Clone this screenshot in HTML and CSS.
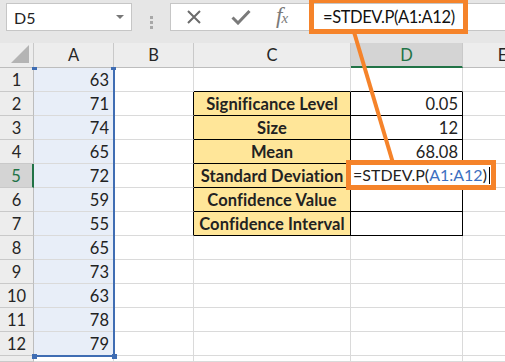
FILE: index.html
```html
<!doctype html>
<html lang="en">
    <head>
        <meta charset="UTF-8" />
        <title>STDEV.P - Excel</title>
        <link rel="stylesheet" href="styles.css">
    </head>
    <body>
        <div class="app">
            <div class="toolbar">
                <div class="name-box">
                    <span>D5</span>
                    <span class="caret"></span>
                </div>
                <div class="grip"><i></i><i></i><i></i></div>
                <div class="formula-bar">
                    <div class="fb-buttons">
                        <svg class="fb-icon" width="16" height="16" viewBox="0 0 16 16">
                            <path d="M2 2 L14 14 M14 2 L2 14" stroke="#6b6b6b" stroke-width="2" fill="none" />
                        </svg>
                        <svg class="fb-icon" width="20" height="16" viewBox="0 0 20 16">
                            <path d="M1.5 8.5 L7 14 L18.5 2" stroke="#7a7a7a" stroke-width="3" fill="none" />
                        </svg>
                        <span class="fx">f<sub>x</sub></span>
                    </div>
                    <div class="fb-input">=STDEV.P(A1:A12)</div>
                </div>
            </div>

            <div class="sheet">
                <div class="hd corner"><span class="tri"></span></div>
                <div class="hd">A</div>
                <div class="hd">B</div>
                <div class="hd">C</div>
                <div class="hd active-col">D</div>
                <div class="hd">E</div>

                <div class="rh">1</div>
                <div class="c sel num">63</div><div class="c"></div><div class="c tb-top"></div><div class="c tb-top"></div><div class="c"></div>

                <div class="rh">2</div>
                <div class="c sel num">71</div><div class="c tb-left"></div><div class="c tb label">Significance Level</div><div class="c tb num">0.05</div><div class="c"></div>

                <div class="rh">3</div>
                <div class="c sel num">74</div><div class="c tb-left"></div><div class="c tb label">Size</div><div class="c tb num">12</div><div class="c"></div>

                <div class="rh">4</div>
                <div class="c sel num">65</div><div class="c tb-left"></div><div class="c tb label">Mean</div><div class="c tb num">68.08</div><div class="c"></div>

                <div class="rh active-row">5</div>
                <div class="c sel num">72</div><div class="c tb-left"></div><div class="c tb label">Standard Deviation</div><div class="c tb"></div><div class="c"></div>

                <div class="rh">6</div>
                <div class="c sel num">59</div><div class="c tb-left"></div><div class="c tb label">Confidence Value</div><div class="c tb"></div><div class="c"></div>

                <div class="rh">7</div>
                <div class="c sel num">55</div><div class="c tb-left"></div><div class="c tb label">Confidence Interval</div><div class="c tb"></div><div class="c"></div>

                <div class="rh">8</div>
                <div class="c sel num">65</div><div class="c"></div><div class="c"></div><div class="c"></div><div class="c"></div>

                <div class="rh">9</div>
                <div class="c sel num">73</div><div class="c"></div><div class="c"></div><div class="c"></div><div class="c"></div>

                <div class="rh">10</div>
                <div class="c sel num">63</div><div class="c"></div><div class="c"></div><div class="c"></div><div class="c"></div>

                <div class="rh">11</div>
                <div class="c sel num">78</div><div class="c"></div><div class="c"></div><div class="c"></div><div class="c"></div>

                <div class="rh">12</div>
                <div class="c sel num">79</div><div class="c"></div><div class="c"></div><div class="c"></div><div class="c"></div>

                <div class="rh"></div>
                <div class="c"></div><div class="c"></div><div class="c"></div><div class="c"></div><div class="c"></div>
            </div>

            <!-- range highlight A1:A12 -->
            <div class="range">
                <span class="handle h-tl"></span>
                <span class="handle h-tr"></span>
                <span class="handle h-bl"></span>
                <span class="handle h-br"></span>
            </div>

            <!-- callout -->
            <svg class="connector" width="505" height="362">
                <line x1="354" y1="32" x2="393" y2="163" stroke="#f5832a" stroke-width="4" />
            </svg>
            <div class="callout callout-bar"></div>
            <div class="callout callout-cell">
                =STDEV.P(<span class="ref">A1:A12</span>)<span class="cursor"></span>
            </div>
        </div>
    </body>
</html>
```

FILE: styles.css
```css
* {
    margin: 0;
    padding: 0;
    box-sizing: border-box;
}

body {
    font-family: Lato, "Open Sans", sans-serif;
    color: #222;
    background: #fff;
    width: 505px;
    height: 362px;
    overflow: hidden;
}

.app {
    position: relative;
    width: 505px;
    height: 362px;
    overflow: hidden;
}

/* top bar */

.toolbar {
    height: 43px;
    background: #e6e6e6;
    display: flex;
    padding: 3px 0 0 6px;
}

.name-box {
    width: 126px;
    height: 28px;
    background: #fff;
    border: 1px solid #c6c6c6;
    display: flex;
    align-items: center;
    justify-content: space-between;
    padding: 0 7px 0 7px;
    font-size: 16px;
}

.caret {
    width: 0;
    height: 0;
    border-left: 4px solid transparent;
    border-right: 4px solid transparent;
    border-top: 4px solid #777;
}

.grip {
    width: 38px;
    display: flex;
    flex-direction: column;
    align-items: center;
    justify-content: center;
    gap: 2px;
    padding-bottom: 2px;
}

.grip i {
    width: 3px;
    height: 3px;
    background: #a8a8a8;
}

.formula-bar {
    flex: 1;
    height: 28px;
    background: #fff;
    border: 1px solid #c6c6c6;
    border-right: none;
    display: flex;
    align-items: center;
}

.fb-buttons {
    display: flex;
    align-items: center;
    gap: 29px;
    padding-left: 15px;
    width: 139px;
}

.fx {
    font-family: "Liberation Serif", serif;
    font-style: italic;
    font-size: 23px;
    color: #7a7a7a;
    letter-spacing: -1px;
    margin-left: -4px;
    margin-top: -2px;
}

.fx sub {
    font-size: 15px;
    vertical-align: baseline;
}

.fb-input {
    padding-left: 13px;
    font-size: 16.5px;
    letter-spacing: -0.4px;
    color: #111;
}

/* sheet grid */

.sheet {
    display: grid;
    grid-template-columns: 34px 80px 80px 157px 112px 80px;
    grid-template-rows: 25px repeat(12, 24px) 1fr;
    height: 319px;
}

.hd {
    background: #ededed;
    border-right: 1px solid #c9c9c9;
    border-bottom: 1px solid #bdbdbd;
    display: flex;
    align-items: center;
    justify-content: center;
    font-size: 16.5px;
    color: #262626;
}

.corner {
    position: relative;
}

.tri {
    position: absolute;
    right: 4px;
    bottom: 4px;
    width: 0;
    height: 0;
    border-left: 18px solid transparent;
    border-bottom: 18px solid #b4b4b4;
}

.active-col {
    background: #d4d4d4;
    color: #217346;
    border-bottom: 2px solid #217346;
}

.rh {
    background: #ededed;
    border-right: 1px solid #bdbdbd;
    border-bottom: 1px solid #c9c9c9;
    display: flex;
    align-items: center;
    justify-content: center;
    font-size: 16.5px;
    color: #262626;
}

.active-row {
    background: #d4d4d4;
    color: #217346;
    border-right: 2px solid #217346;
}

.c {
    border-right: 1px solid #dadada;
    border-bottom: 1px solid #dadada;
    display: flex;
    align-items: center;
    font-size: 16.5px;
    padding: 0 4px;
    white-space: nowrap;
}

.sel {
    background: #e8eef8;
}

.num {
    justify-content: flex-end;
}

.label {
    justify-content: center;
    font-weight: 700;
    background: #ffe699;
    letter-spacing: 0.1px;
}

.tb {
    border-right-color: #000;
    border-bottom-color: #000;
}

.tb-top {
    border-bottom-color: #000;
}

.tb-left {
    border-right-color: #000;
}

/* A1:A12 reference outline */

.range {
    position: absolute;
    left: 33px;
    top: 68px;
    width: 82px;
    height: 289px;
    border-right: 2px solid #3f6db3;
    border-bottom: 2px solid #3f6db3;
}

.handle {
    position: absolute;
    width: 5px;
    height: 5px;
    background: #3f6db3;
}

.h-tl { left: -1px; top: -1px; height: 3px; }
.h-tr { right: -3px; top: -1px; height: 3px; }
.h-bl { left: -1px; bottom: -4px; }
.h-br { right: -4px; bottom: -4px; }

/* orange callouts */

.connector {
    position: absolute;
    left: 0;
    top: 0;
}

.callout {
    position: absolute;
    border: 5px solid #f5832a;
}

.callout-bar {
    left: 309px;
    top: -2px;
    width: 159px;
    height: 36px;
}

.callout-cell {
    left: 346px;
    top: 160px;
    width: 150px;
    height: 30px;
    background: #fff;
    font-size: 16px;
    line-height: 20px;
    padding-left: 2px;
    white-space: nowrap;
    display: flex;
    align-items: center;
}

.ref {
    color: #3c6fc0;
}

.cursor {
    width: 1px;
    height: 17px;
    background: #000;
    margin-left: 2px;
}
```
